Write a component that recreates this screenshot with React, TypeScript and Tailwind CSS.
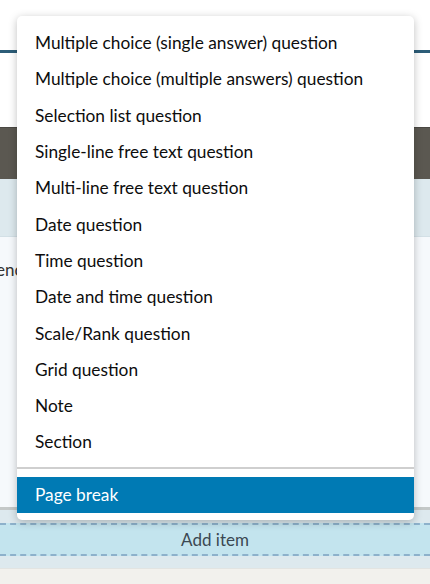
import React from "react";

const items = [
  "Multiple choice (single answer) question",
  "Multiple choice (multiple answers) question",
  "Selection list question",
  "Single-line free text question",
  "Multi-line free text question",
  "Date question",
  "Time question",
  "Date and time question",
  "Scale/Rank question",
  "Grid question",
  "Note",
  "Section",
];

const App = () => {
  return (
    <div className="relative w-[430px] h-[584px] overflow-hidden bg-white font-['Lato',sans-serif]">
      {/* page behind the menu */}
      <div className="flex flex-col h-full">
        <div className="h-[50px] bg-white" />
        <div className="h-[3px] bg-[#2c5d78]" />
        <div className="h-[74px] bg-white" />
        <div className="h-[52px] bg-[#5b5851] border-t border-[#4a4843]" />
        <div className="h-[58px] bg-[#dde9ee] border-b border-[#d3e0e6]" />
        <div className="h-[270px] bg-[#f6f9fc] pt-[20px]">
          <p className="-ml-[4px] text-[17px] text-[#333]">ence</p>
        </div>
        <div className="h-[3px] bg-[#c4c8c8]" />
        <div className="h-[13px] bg-[#dde9ee]" />
        <div className="h-[33px] bg-[#c3e4ee] border-y-2 border-dashed border-[#8db1cb] flex items-center justify-center text-[17px] text-[#3b4852]">
          Add item
        </div>
        <div className="h-[12px] bg-[#dde9ee]" />
        <div className="flex-1 bg-[#f2f1ed] border-t border-[#e2e4e2]" />
      </div>

      {/* dropdown menu */}
      <div className="absolute left-[17px] top-[16px] w-[397px] bg-white rounded-[5px] shadow-[0_2px_8px_rgba(0,0,0,0.25)] pt-[9px] pb-[7px]">
        {items.map((t) => (
          <div key={t} className="h-[36.3px] flex items-center px-[18px] text-[17.3px] text-[#0d0d0d]">
            {t}
          </div>
        ))}
        <div className="mt-[6px] mb-[8px] h-[2px] bg-[#cfcfcf]" />
        <div className="h-[36px] flex items-center px-[18px] text-[17.3px] text-white bg-[#007ab4]">
          Page break
        </div>
      </div>
    </div>
  );
};

export default App;
